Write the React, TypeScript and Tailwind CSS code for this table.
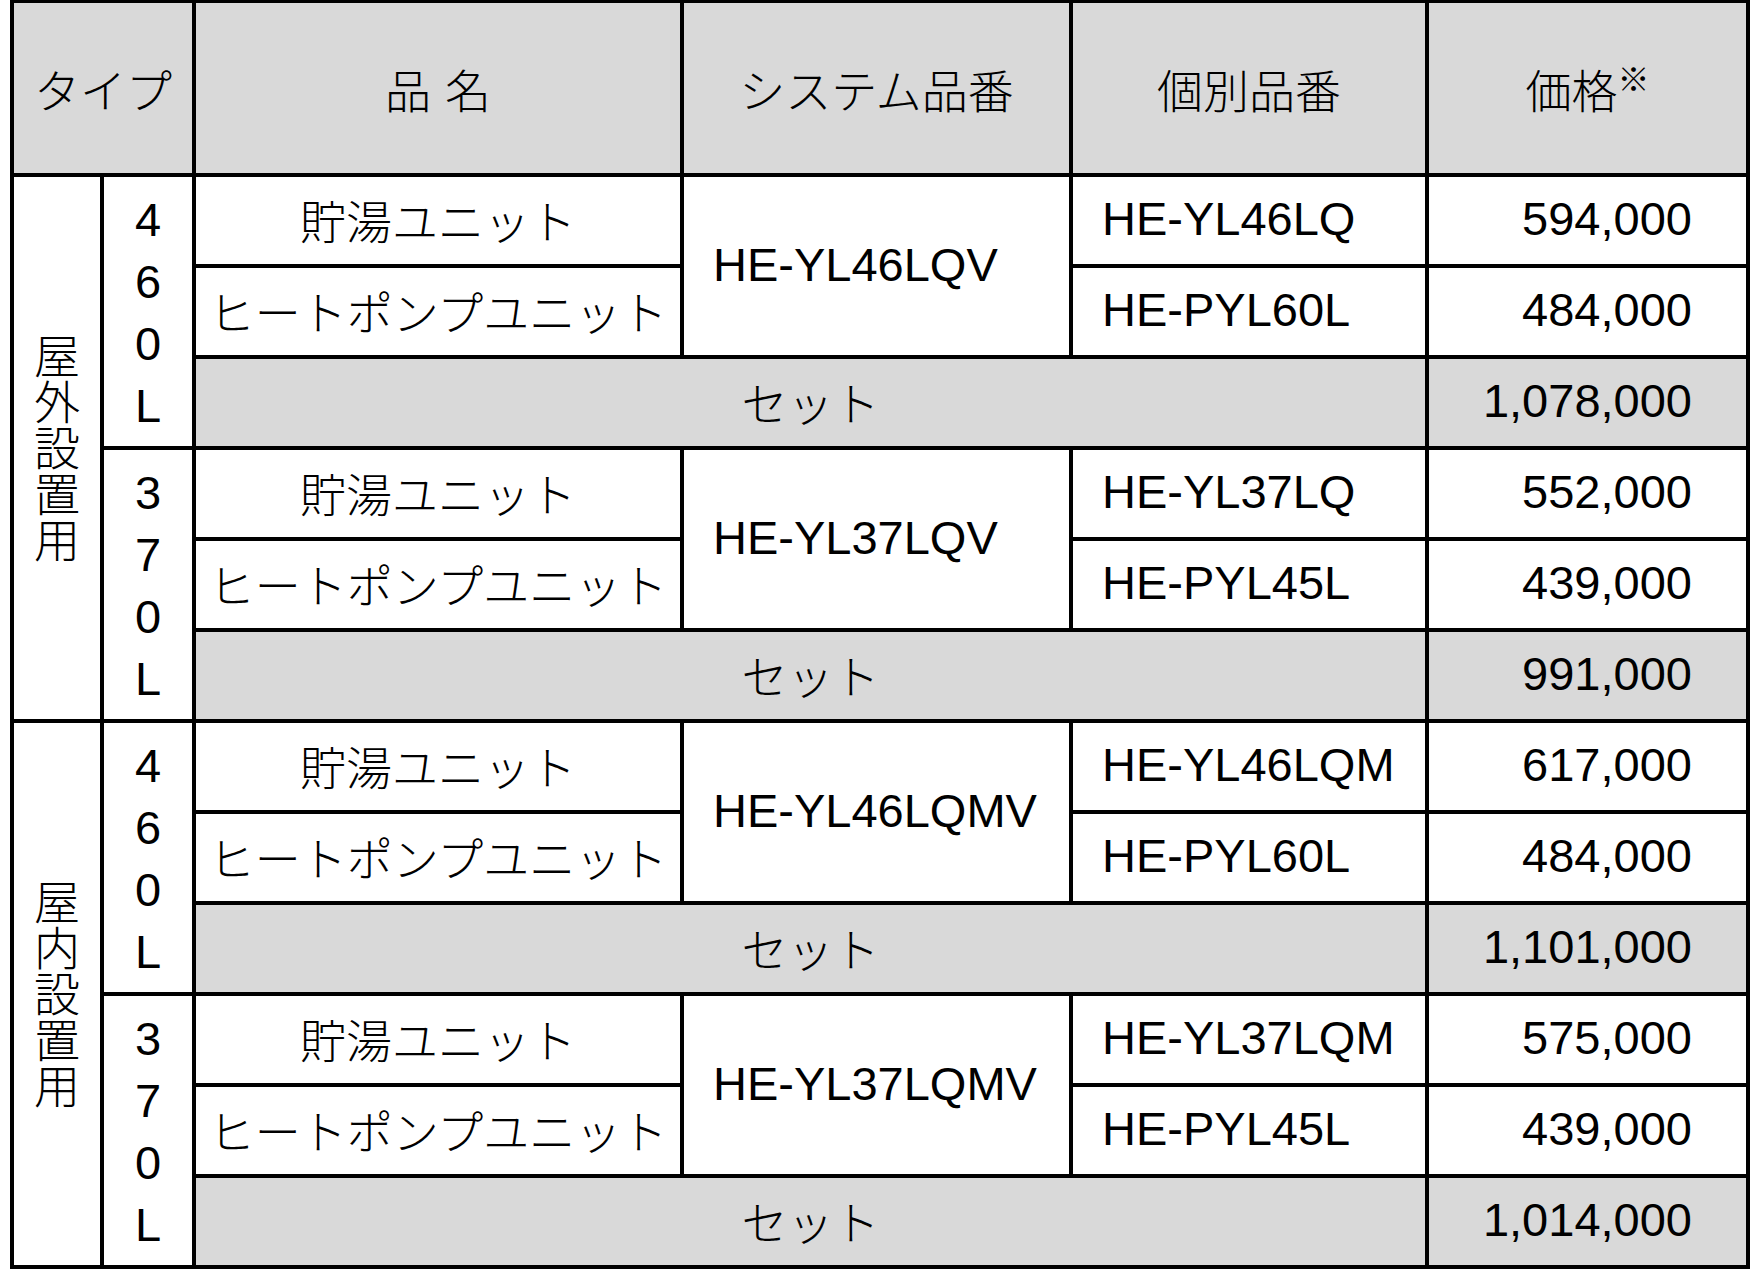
import React from 'react';

const JP = "font-['Noto_Sans_CJK_JP','Noto_Sans_CJK_SC',sans-serif] font-light";
const EN = "font-['Liberation_Sans','Arial',sans-serif]";

const groups = [
  {
    cap: ['4', '6', '0', 'L'],
    sys: 'HE-YL46LQV',
    items: [
      ['HE-YL46LQ', '594,000'],
      ['HE-PYL60L', '484,000'],
    ],
    total: '1,078,000',
  },
  {
    cap: ['3', '7', '0', 'L'],
    sys: 'HE-YL37LQV',
    items: [
      ['HE-YL37LQ', '552,000'],
      ['HE-PYL45L', '439,000'],
    ],
    total: '991,000',
  },
  {
    cap: ['4', '6', '0', 'L'],
    sys: 'HE-YL46LQMV',
    items: [
      ['HE-YL46LQM', '617,000'],
      ['HE-PYL60L', '484,000'],
    ],
    total: '1,101,000',
  },
  {
    cap: ['3', '7', '0', 'L'],
    sys: 'HE-YL37LQMV',
    items: [
      ['HE-YL37LQM', '575,000'],
      ['HE-PYL45L', '439,000'],
    ],
    total: '1,014,000',
  },
];

// row-start classes for rows 2..13
const RS: Record<number, string> = {
  2: 'row-start-2',
  3: 'row-start-3',
  4: 'row-start-4',
  5: 'row-start-5',
  6: 'row-start-6',
  7: 'row-start-7',
  8: 'row-start-8',
  9: 'row-start-9',
  10: 'row-start-10',
  11: 'row-start-11',
  12: 'row-start-12',
  13: 'row-start-13',
};

const names = ['貯湯ユニット', 'ヒートポンプユニット'];

function VerticalJP({ text }: { text: string }) {
  return (
    <div className={`[writing-mode:vertical-rl] text-[46px] leading-[46px] text-black ${JP}`}>
      {text}
    </div>
  );
}

export default function App() {
  return (
    <div className="bg-white w-[1752px] h-[1279px]">
      <div className="ml-[10px] inline-grid grid-cols-[86px_88px_484px_385px_352px_317px] grid-rows-[170px_repeat(12,87px)] gap-[4px] bg-black pt-[3px] px-[4px] pb-[4px]">
        {/* Header */}
        <div className={`col-start-1 col-span-2 row-start-1 bg-[#d9d9d9] flex items-center justify-center text-[46px] text-black ${JP}`}>
          タイプ
        </div>
        <div className={`col-start-3 row-start-1 bg-[#d9d9d9] flex items-center justify-center gap-[14px] text-[46px] text-black ${JP}`}>
          <span>品</span>
          <span>名</span>
        </div>
        <div className={`col-start-4 row-start-1 bg-[#d9d9d9] flex items-center justify-center text-[46px] text-black ${JP}`}>
          システム品番
        </div>
        <div className={`col-start-5 row-start-1 bg-[#d9d9d9] flex items-center justify-center text-[46px] text-black ${JP}`}>
          個別品番
        </div>
        <div className={`col-start-6 row-start-1 bg-[#d9d9d9] flex items-center justify-center text-black ${JP}`}>
          <div className="flex items-start">
            <span className="text-[46px] leading-[46px]">価格</span>
            <span className="text-[32px] leading-[32px] -mt-[4px] font-normal">※</span>
          </div>
        </div>

        {/* Type cells */}
        <div className="col-start-1 row-start-2 row-span-6 bg-white flex items-center justify-center">
          <VerticalJP text="屋外設置用" />
        </div>
        <div className="col-start-1 row-start-8 row-span-6 bg-white flex items-center justify-center">
          <VerticalJP text="屋内設置用" />
        </div>

        {groups.map((g, gi) => {
          const base = 2 + gi * 3;
          return (
            <React.Fragment key={gi}>
              <div className={`col-start-2 ${RS[base]} row-span-3 bg-white flex items-center justify-center`}>
                <div className={`flex flex-col items-center pt-[2px] text-[47px] leading-[62px] text-black ${EN}`}>
                  {g.cap.map((c, i) => (
                    <span key={i}>{c}</span>
                  ))}
                </div>
              </div>
              {names.map((n, i) => (
                <div
                  key={'n' + i}
                  className={`col-start-3 ${RS[base + i]} bg-white flex items-center justify-center pb-[2px] text-[46px] text-black ${JP}`}
                >
                  {n}
                </div>
              ))}
              <div className={`col-start-4 ${RS[base]} row-span-2 bg-white flex items-center pl-[29px] pb-[2px] text-[47px] text-black ${EN}`}>
                {g.sys}
              </div>
              {g.items.map((it, i) => (
                <React.Fragment key={'i' + i}>
                  <div className={`col-start-5 ${RS[base + i]} bg-white flex items-center pl-[29px] pb-[2px] text-[47px] text-black ${EN}`}>
                    {it[0]}
                  </div>
                  <div className={`col-start-6 ${RS[base + i]} bg-white flex items-center justify-end pr-[54px] pb-[2px] text-[47px] text-black ${EN}`}>
                    {it[1]}
                  </div>
                </React.Fragment>
              ))}
              <div className={`col-start-3 col-span-3 ${RS[base + 2]} bg-[#d9d9d9] flex items-center justify-center pb-[2px] text-[46px] text-black ${JP}`}>
                セット
              </div>
              <div className={`col-start-6 ${RS[base + 2]} bg-[#d9d9d9] flex items-center justify-end pr-[54px] pb-[2px] text-[47px] text-black ${EN}`}>
                {g.total}
              </div>
            </React.Fragment>
          );
        })}
      </div>
    </div>
  );
}
